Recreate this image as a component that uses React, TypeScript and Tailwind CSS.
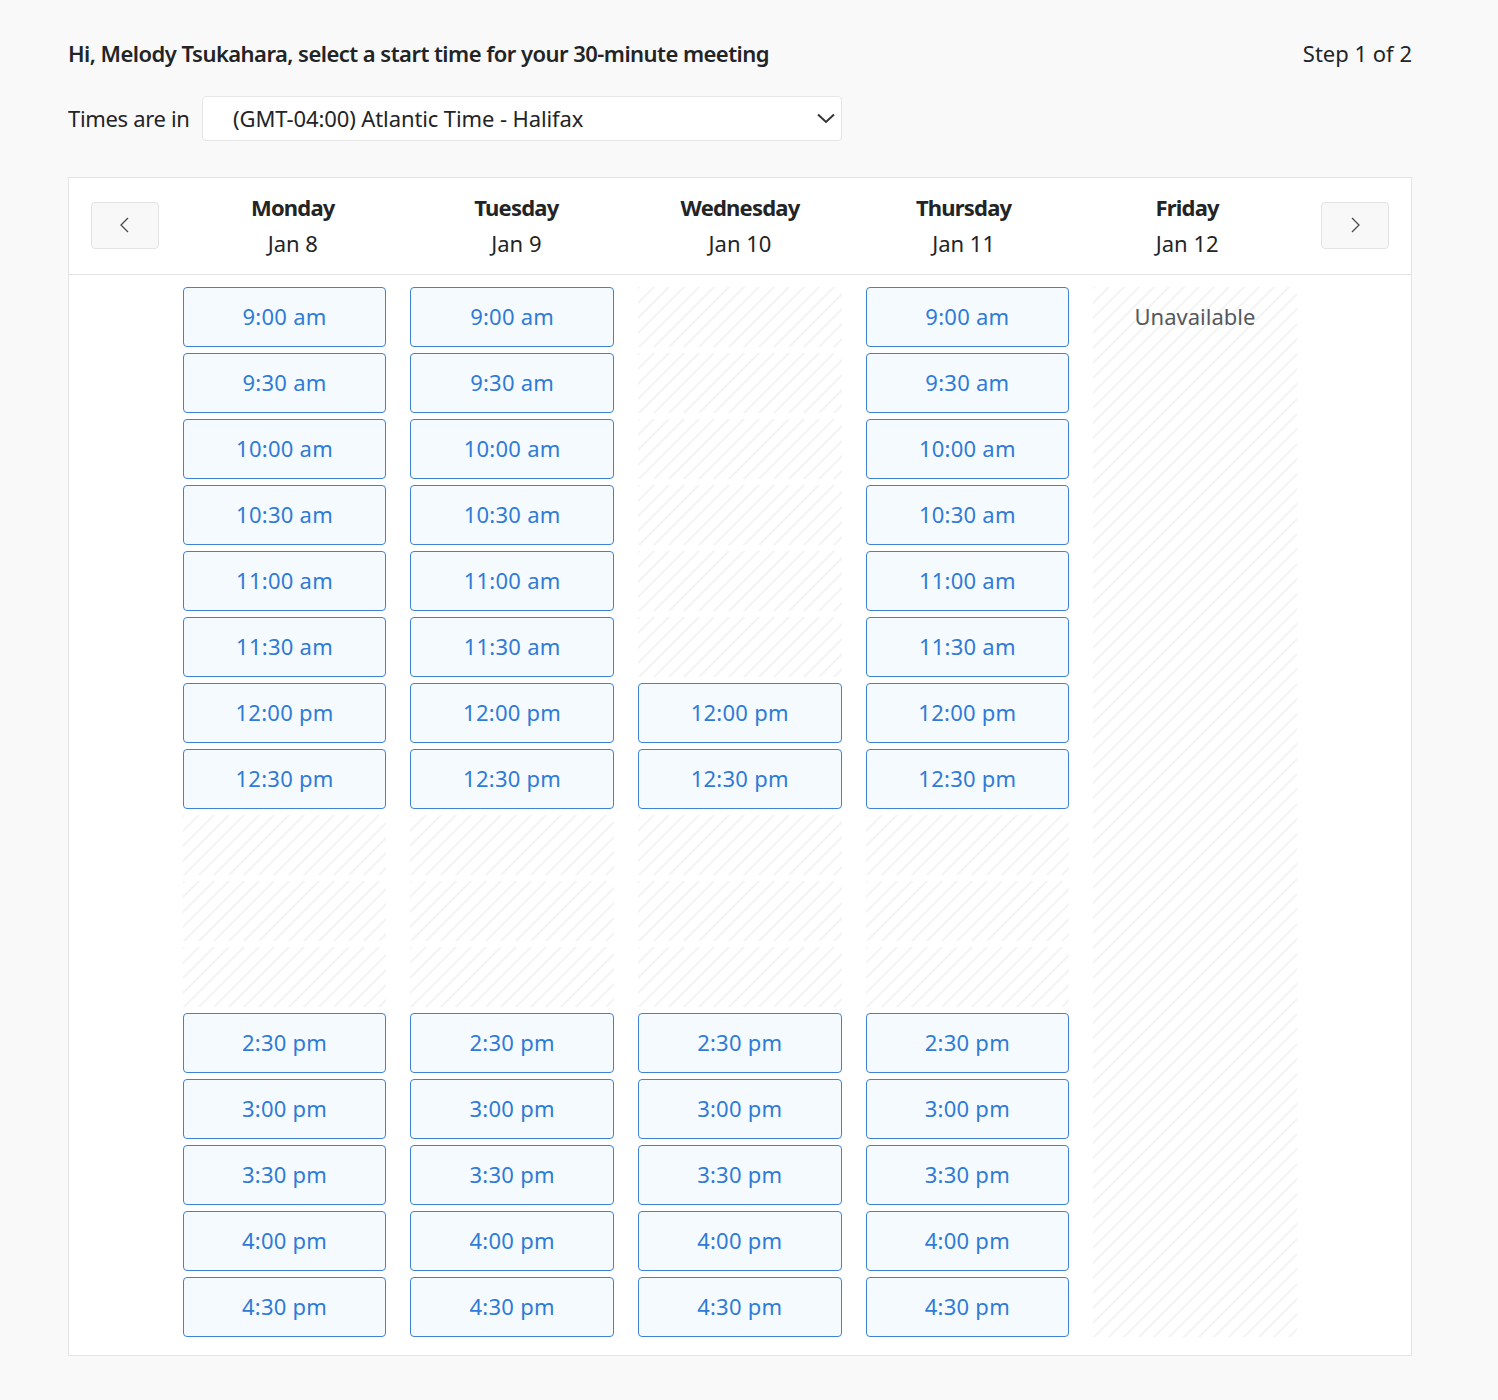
const font = "font-['Noto_Sans','Open_Sans',sans-serif]";
const hatch =
  "bg-[repeating-linear-gradient(135deg,#f4f4f4_0,#f4f4f4_2px,#ffffff_2px,#ffffff_10.6px)]";

const morning = ["9:00 am", "9:30 am", "10:00 am", "10:30 am", "11:00 am", "11:30 am"];
const midday = ["12:00 pm", "12:30 pm"];
const afternoon = ["2:30 pm", "3:00 pm", "3:30 pm", "4:00 pm", "4:30 pm"];

type Day = { name: string; date: string; slots: (string | null)[] | null };

const full = [...morning, ...midday, null, null, null, ...afternoon];
const wed = [null, null, null, null, null, null, ...midday, null, null, null, ...afternoon];

const days: Day[] = [
  { name: "Monday", date: "Jan 8", slots: full },
  { name: "Tuesday", date: "Jan 9", slots: full },
  { name: "Wednesday", date: "Jan 10", slots: wed },
  { name: "Thursday", date: "Jan 11", slots: full },
  { name: "Friday", date: "Jan 12", slots: null },
];

function Chevron({ dir }: { dir: "left" | "right" }) {
  return (
    <svg width="10" height="16" viewBox="0 0 10 16" fill="none" stroke="#4a4a4a" strokeWidth="1.3">
      <path d={dir === "left" ? "M8 1 L1 8 L8 15" : "M2 1 L9 8 L2 15"} />
    </svg>
  );
}

function NavButton({ dir }: { dir: "left" | "right" }) {
  return (
    <button className="w-[68px] h-[47px] shrink-0 flex items-center justify-center rounded-[4px] border border-[#e3e3e3] bg-[#f8f8f8]">
      <Chevron dir={dir} />
    </button>
  );
}

export default function App() {
  return (
    <div className={`${font} w-[1498px] h-[1400px] bg-[#f9f9f9] pl-[68px] pr-[86px] pt-[36px] text-[#222426]`}>
      <div className="flex items-center justify-between h-[34px]">
        <h1 className="text-[22px] font-semibold leading-[34px] tracking-[-0.54px]">
          Hi, Melody Tsukahara, select a start time for your 30-minute meeting
        </h1>
        <span className="text-[22px] leading-[34px]">Step 1 of 2</span>
      </div>

      <div className="flex items-center gap-[12.5px] mt-[26px] h-[45px]">
        <span className="text-[22px] tracking-[-0.33px]">Times are in</span>
        <div className="w-[640px] h-[45px] flex items-center justify-between pl-[30px] pr-[6px] rounded-[4px] border border-[#e6e6e6] bg-white text-[22px] tracking-[-0.11px]">
          <span>(GMT-04:00) Atlantic Time - Halifax</span>
          <svg width="18" height="11" viewBox="0 0 18 11" fill="none" stroke="#333333" strokeWidth="2">
            <path d="M1 1.5 L9 9 L17 1.5" />
          </svg>
        </div>
      </div>

      <div className="mt-[36px] border border-[#e4e4e4] bg-white">
        <div className="flex items-center h-[97px] px-[22px] pb-[2px] border-b border-[#e4e4e4]">
          <NavButton dir="left" />
          <div className="flex-1 grid grid-cols-5 mx-[22px]">
            {days.map((d) => (
              <div key={d.name} className="text-center">
                <div className="text-[22px] font-bold leading-[36px] tracking-[-0.8px]">{d.name}</div>
                <div className="text-[22px] leading-[36px]">{d.date}</div>
              </div>
            ))}
          </div>
          <NavButton dir="right" />
        </div>

        <div className="grid grid-cols-5 gap-x-[24px] pl-[113.75px] pr-[114.25px] pt-[12px] pb-[18px]">
          {days.map((d) =>
            d.slots ? (
              <div key={d.name} className="flex flex-col gap-[6px]">
                {d.slots.map((s, i) =>
                  s ? (
                    <button
                      key={i}
                      className="h-[60px] pb-[1px] rounded-[4px] border border-[#3d82d4] bg-[#f5faff] text-[22px] tracking-[0.25px] text-[#2f7bd6]"
                    >
                      {s}
                    </button>
                  ) : (
                    <div key={i} className={`h-[60px] ${hatch}`} />
                  ),
                )}
              </div>
            ) : (
              <div key={d.name} className={`h-[1050px] pt-[11px] text-center text-[22px] leading-[36px] text-[#55585c] ${hatch}`}>
                Unavailable
              </div>
            ),
          )}
        </div>
      </div>
    </div>
  );
}
